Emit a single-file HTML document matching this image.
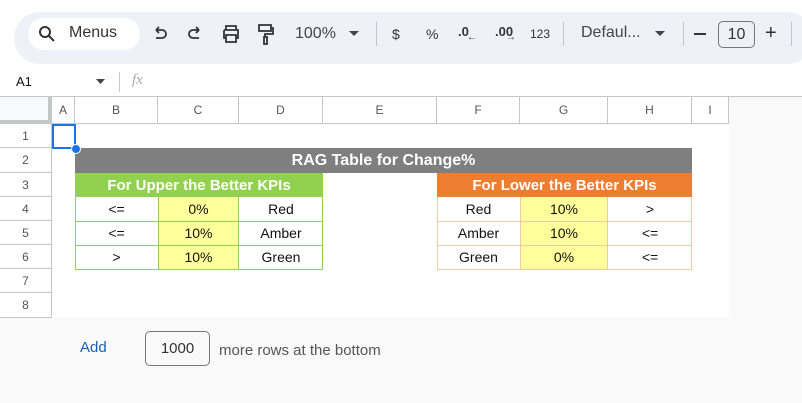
<!DOCTYPE html>
<html><head><style>
*{margin:0;padding:0;box-sizing:border-box}
body{width:802px;height:403px;overflow:hidden;background:#f8f9f8;font-family:"Liberation Sans",Arial,sans-serif;position:relative;color:#444}
.a{position:absolute}
.tb{left:0;top:0;width:802px;height:66px;background:#fff}
.tbar{left:14px;top:12px;width:800px;height:52px;background:#eef2f8;border-radius:26px}
.pill{left:28px;top:18px;width:112px;height:32px;background:#fff;border-radius:16px}
.t{font-size:16px;color:#444}
.sep{width:1px;height:24px;background:#c4c7c5;top:22px}
.c{position:absolute;display:flex;align-items:center;justify-content:center;font-size:14px;color:#111}
.h{position:absolute;display:flex;align-items:center;justify-content:center;font-size:12px;color:#555;border-right:1px solid #c4c7c5;border-bottom:1px solid #c4c7c5;background:#fff}
</style></head><body>
<div class="a tb"></div>
<div class="a tbar"></div>
<div class="a pill"></div>
<svg class="a" style="left:38px;top:25px" width="18" height="18" viewBox="0 0 18 18"><circle cx="7" cy="7" r="5" fill="none" stroke="#333" stroke-width="2"/><path d="M11 11l5 5" stroke="#333" stroke-width="2"/></svg>
<div class="a t" style="left:69px;top:24px;color:#333">Menus</div>
<svg class="a" style="left:151px;top:26px" width="18" height="16" viewBox="0 0 18 16"><path d="M5 4H11a4 4 0 010 8H5M5 4l3-3M5 4l3 3" fill="none" stroke="#333" stroke-width="1.8"/></svg>
<svg class="a" style="left:186px;top:26px" width="18" height="16" viewBox="0 0 18 16"><path d="M13 4H7a4 4 0 000 8h6M13 4l-3-3M13 4l-3 3" fill="none" stroke="#333" stroke-width="1.8"/></svg>
<svg class="a" style="left:221px;top:24px" width="20" height="20" viewBox="0 0 20 20"><path d="M5 6V2h10v4M3 6h14v8h-2M5 14H3V6M5 11h10v7H5z" fill="none" stroke="#333" stroke-width="1.8"/></svg>
<svg class="a" style="left:257px;top:23px" width="18" height="22" viewBox="0 0 18 22"><path d="M2 2h12v6H2zM14 5h2v6H8v3M7 14h3v7H7z" fill="none" stroke="#333" stroke-width="1.8"/></svg>
<div class="a t" style="left:295px;top:25px">100%</div>
<svg class="a" style="left:349px;top:31px" width="10" height="6"><path d="M0 0h10L5 5z" fill="#444"/></svg>
<div class="a sep" style="left:376px"></div>
<div class="a" style="left:392px;top:26px;font-size:14px;color:#333">$</div>
<div class="a" style="left:426px;top:26px;font-size:14px;color:#333">%</div>
<div class="a" style="left:458px;top:24px;font-size:13px;color:#333;font-weight:bold">.0</div>
<div class="a" style="left:467px;top:32px;font-size:10px;color:#333">←</div>
<div class="a" style="left:495px;top:24px;font-size:13px;color:#333;font-weight:bold">.00</div>
<div class="a" style="left:506px;top:32px;font-size:10px;color:#333">→</div>
<div class="a" style="left:530px;top:27px;font-size:12px;color:#333">123</div>
<div class="a sep" style="left:563px"></div>
<div class="a t" style="left:581px;top:24px">Defaul...</div>
<svg class="a" style="left:655px;top:31px" width="10" height="6"><path d="M0 0h10L5 5z" fill="#444"/></svg>
<div class="a sep" style="left:683px"></div>
<div class="a" style="left:694px;top:33px;width:12px;height:2px;background:#333"></div>
<div class="a" style="left:718px;top:21px;width:37px;height:27px;border:1px solid #747775;border-radius:5px;font-size:16px;text-align:center;line-height:25px;color:#333">10</div>
<div class="a" style="left:765px;top:22px;font-size:20px;color:#333">+</div>
<div class="a sep" style="left:791px"></div>
<div class="a" style="left:0;top:66px;width:802px;height:31px;background:#fff;border-bottom:1px solid #c4c7c5"></div>
<div class="a" style="left:16px;top:74px;font-size:13px;color:#111">A1</div>
<svg class="a" style="left:96px;top:79px" width="9" height="5"><path d="M0 0h9L4.5 5z" fill="#444"/></svg>
<div class="a" style="left:119px;top:72px;width:1px;height:20px;background:#c4c7c5"></div>
<div class="a" style="left:132px;top:72px;font-size:15px;font-style:italic;color:#aaa;font-family:'Liberation Serif',serif">fx</div>
<div class="a" style="left:0;top:97px;width:729px;height:221px;background:#fff"></div>
<div class="a" style="left:0;top:97px;width:52px;height:27px;background:#f8f9fa;border-right:4px solid #c4c7c5;border-bottom:4px solid #c4c7c5"></div>
<div class="h" style="left:52px;top:97px;width:23px;height:27px">A</div>
<div class="h" style="left:75px;top:97px;width:83px;height:27px">B</div>
<div class="h" style="left:158px;top:97px;width:81px;height:27px">C</div>
<div class="h" style="left:239px;top:97px;width:84px;height:27px">D</div>
<div class="h" style="left:323px;top:97px;width:114px;height:27px">E</div>
<div class="h" style="left:437px;top:97px;width:83px;height:27px">F</div>
<div class="h" style="left:520px;top:97px;width:88px;height:27px">G</div>
<div class="h" style="left:608px;top:97px;width:84px;height:27px">H</div>
<div class="h" style="left:692px;top:97px;width:37px;height:27px">I</div>
<div class="h" style="left:0;top:124px;width:52px;height:24px">1</div>
<div class="h" style="left:0;top:148px;width:52px;height:25px">2</div>
<div class="h" style="left:0;top:173px;width:52px;height:24px">3</div>
<div class="h" style="left:0;top:197px;width:52px;height:24px">4</div>
<div class="h" style="left:0;top:221px;width:52px;height:24px">5</div>
<div class="h" style="left:0;top:245px;width:52px;height:24px">6</div>
<div class="h" style="left:0;top:269px;width:52px;height:24px">7</div>
<div class="h" style="left:0;top:293px;width:52px;height:25px">8</div>
<div class="a" style="left:52px;top:124px;width:24px;height:25px;border:2px solid #1a73e8"></div>
<div class="c" style="left:75px;top:148px;width:617px;height:25px;background:#7f7f7f;color:#fff;font-weight:bold;font-size:16px">RAG Table for Change%</div>
<div class="c" style="left:75px;top:173px;width:248px;height:24px;background:#92d050;color:#fff;font-weight:bold;font-size:15px">For Upper the Better KPIs</div>
<div class="c" style="left:437px;top:173px;width:255px;height:24px;background:#ed7d31;color:#fff;font-weight:bold;font-size:15px">For Lower the Better KPIs</div>
<div class="a" style="left:71px;top:144px;width:10px;height:10px;border-radius:50%;background:#1a73e8;border:1px solid #fff"></div>
<div class="a" style="left:75px;top:197px;width:248px;height:73px;border:1px solid #92d050;border-top:none"></div>
<div class="a" style="left:437px;top:197px;width:255px;height:73px;border:1px solid #f0c9a6;border-top:none"></div>
<div class="a" style="left:158px;top:197px;width:81px;height:72px;background:#ffff9c;border-left:1px solid #92d050;border-right:1px solid #92d050"></div>
<div class="a" style="left:520px;top:197px;width:88px;height:72px;background:#ffff9c;border-left:1px solid #f0c9a6;border-right:1px solid #f0c9a6"></div>
<div class="a" style="left:75px;top:221px;width:248px;height:1px;background:#92d050"></div>
<div class="a" style="left:75px;top:245px;width:248px;height:1px;background:#92d050"></div>
<div class="a" style="left:437px;top:221px;width:255px;height:1px;background:#f0c9a6"></div>
<div class="a" style="left:437px;top:245px;width:255px;height:1px;background:#f0c9a6"></div>
<div class="c" style="left:75px;top:197px;width:83px;height:24px">&lt;=</div>
<div class="c" style="left:158px;top:197px;width:81px;height:24px">0%</div>
<div class="c" style="left:239px;top:197px;width:84px;height:24px">Red</div>
<div class="c" style="left:75px;top:221px;width:83px;height:24px">&lt;=</div>
<div class="c" style="left:158px;top:221px;width:81px;height:24px">10%</div>
<div class="c" style="left:239px;top:221px;width:84px;height:24px">Amber</div>
<div class="c" style="left:75px;top:245px;width:83px;height:24px">&gt;</div>
<div class="c" style="left:158px;top:245px;width:81px;height:24px">10%</div>
<div class="c" style="left:239px;top:245px;width:84px;height:24px">Green</div>
<div class="c" style="left:437px;top:197px;width:83px;height:24px">Red</div>
<div class="c" style="left:520px;top:197px;width:88px;height:24px">10%</div>
<div class="c" style="left:608px;top:197px;width:84px;height:24px">&gt;</div>
<div class="c" style="left:437px;top:221px;width:83px;height:24px">Amber</div>
<div class="c" style="left:520px;top:221px;width:88px;height:24px">10%</div>
<div class="c" style="left:608px;top:221px;width:84px;height:24px">&lt;=</div>
<div class="c" style="left:437px;top:245px;width:83px;height:24px">Green</div>
<div class="c" style="left:520px;top:245px;width:88px;height:24px">0%</div>
<div class="c" style="left:608px;top:245px;width:84px;height:24px">&lt;=</div>
<div class="a" style="left:80px;top:339px;font-size:15px;color:#1a5fb4">Add</div>
<div class="a" style="left:145px;top:331px;width:65px;height:35px;border:1px solid #747775;border-radius:5px;font-size:15px;text-align:center;line-height:33px;color:#333">1000</div>
<div class="a" style="left:219px;top:342px;font-size:15px;color:#555">more rows at the bottom</div>
</body></html>
